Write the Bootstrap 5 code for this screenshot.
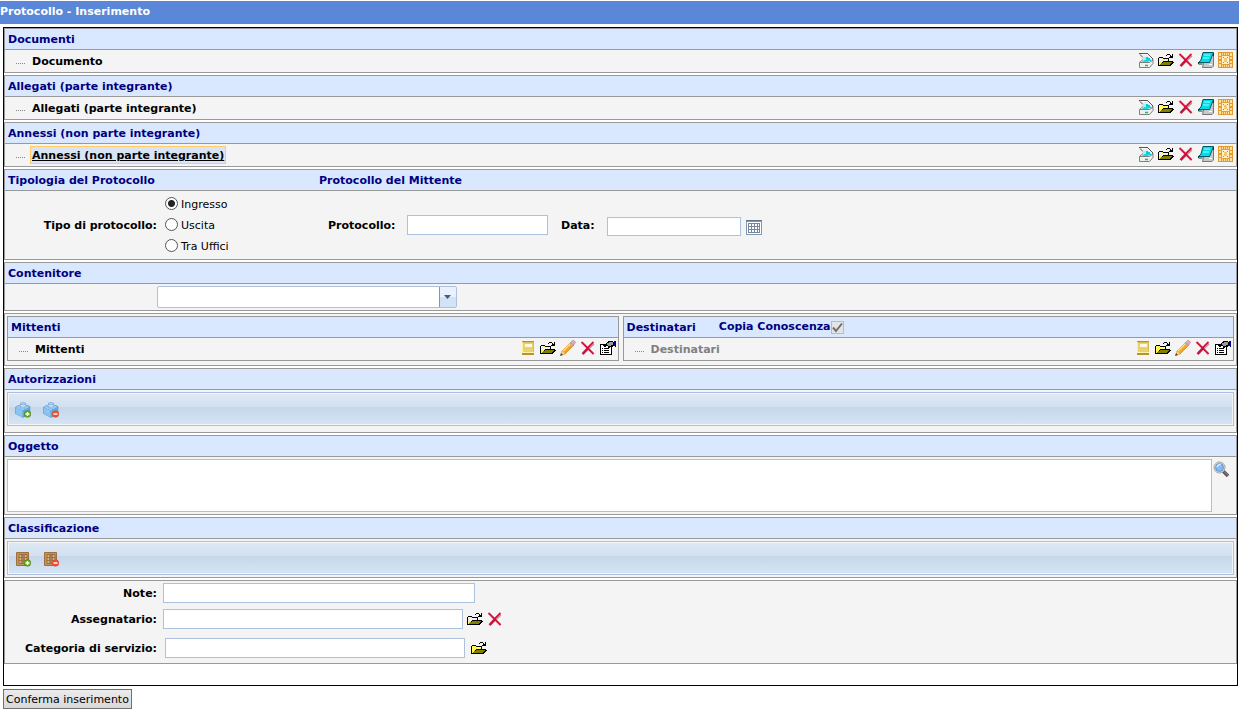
<!DOCTYPE html>
<html lang="it">
<head>
<meta charset="utf-8">
<meta name="viewport" content="width=device-width, initial-scale=1">
<title>Protocollo - Inserimento</title>
<link href="https://cdn.jsdelivr.net/npm/bootstrap@5.3.0/dist/css/bootstrap.min.css" rel="stylesheet">
<style>
  body { font-family: Verdana, "DejaVu Sans", sans-serif; font-size: 11px; line-height: 14px; color: #000; background: #fff; }
  .page-title { margin: 1px 0 3px; height: 23px; line-height: 21px; font-size: 11px; font-weight: 700; color: #fff; background: #5a87d7; }
  .frame { margin: 0 1px 3px 3px; border: 1px solid #000; padding-bottom: 21px; }
  .panels { row-gap: 2px; }
  .panel { border: 1px solid #999; border-radius: 0; background: #f4f4f4; color: #000; }
  .panel > .card-header { height: 21px; padding: 0 3px; line-height: 22px; font-weight: 700; color: #000080; background: #dae8ff; border-bottom: 1px solid #999; border-radius: 0; }
  .panel h2 { font: inherit; margin: 0; }
  .tree-row { height: 22px; padding: 0 2px 0 11px; }
  .tree-icons { align-self: flex-start; padding-top: 2px; gap: 4px; }
  .tree-dots { width: 10px; height: 1px; margin: 5px 4px 0 0; background: repeating-linear-gradient(90deg, #888 0 1px, transparent 1px 2px); }
  .node { font-weight: 700; color: #000; text-decoration: none; border: 1px solid transparent; padding: 2px 1px 0; line-height: 14px; }
  .node.current { background: #d9e4f4; border-color: #ffcc66; text-decoration: underline; }
  .node.off { color: #808080; }
  .icon-btn { border: 0; padding: 0; background: none; width: 16px; height: 16px; display: block; flex: none; }
  .icon-btn svg { display: block; width: 16px; height: 16px; }
  .field { border: 1px solid #abc1de; border-radius: 0; background: #fff; height: 20px; padding: 0 3px; font-size: 11px; min-width: 0; }
  .w-side { width: 152px; }
  .form-cap { font-weight: 700; text-align: right; padding-top: 1px; }
  .head-left { width: 311px; }
  .kind { height: 68px; }
  .kind-left { width: 323px; }
  .radio-line { height: 21px; gap: 3px; }
  .radio-line input { appearance: none; width: 13px; height: 13px; margin: 0 0 1px; border: 1px solid #555; border-radius: 50%; background: #fff; }
  .radio-line input:checked { background: radial-gradient(circle, #222 0 3px, #fff 4px); }
  .radio-line span { padding-top: 1px; }
  .sender-cap { width: 79px; }
  .sender-no { width: 141px; margin-right: 13px; }
  .date-cap { width: 46px; }
  .date-group { padding-top: 3px; gap: 5px; }
  .date-in { width: 134px; height: 19px; }
  .combo { appearance: none; width: 300px; height: 22px; border: 1px solid #abc1de; border-radius: 2px; margin: 2px 0 2px 152px;
    background: url("data:image/svg+xml,%3Csvg xmlns='http://www.w3.org/2000/svg' width='17' height='20'%3E%3Cpath fill='%23e9f1fc' d='M0 0h17v10H0z'/%3E%3Cpath fill='%23d3e3f7' d='M0 10h17v10H0z'/%3E%3Cpath fill='%237b98c4' d='M0 0h1v20H0z'/%3E%3Cpath fill='%23425a8c' d='M5 8h7L8.500 12z'/%3E%3C/svg%3E") right center no-repeat #fff; }
  .parties { padding: 2px 2px 4px; gap: 4px; }
  .copy-check { appearance: none; width: 13px; height: 13px; margin: 0; border: 1px solid #bbb; background: url("data:image/svg+xml,%3Csvg xmlns='http://www.w3.org/2000/svg' viewBox='0 0 11 11'%3E%3Cpath d='M1 5.500l3 3.500L10 1.500' fill='none' stroke='%23707070' stroke-width='2'/%3E%3C/svg%3E") #e4e4e4; }
  .copy-wrap { margin-left: 23px; }
  .tool-strip { margin: 2px; height: 34px; padding: 1px 7px 0; gap: 12px; border: 1px solid #abc1de; box-shadow: inset 0 0 0 1px #f1f6fb; background: linear-gradient(#dfe9f5, #d3e0ef 42%, #c6d7e9 46%, #d5e5f6); }
  .tool-strip.roomy { margin-bottom: 6px; }
  .subject { padding: 2px 7px 2px 2px; gap: 1px; }
  .subject .icon-btn { margin-top: 2px; }
  .area { height: 53px; resize: none; }
  .extra { padding: 2px 0 5px; row-gap: 6px; }
  .extra .field { margin-left: 6px; }
  .extra .after-gap { margin-left: 8px; }
  .wide { width: 312px; }
  .mid { width: 300px; }
  .last-row { padding-top: 3px; }
  .after-field { margin-left: 6px; }
  .confirm { margin-left: 3px; height: 20px; padding: 1px 2px 0; border: 1px solid #707070; background: linear-gradient(#ececec, #d8d8d8); line-height: 16px; color: #000; }
</style>
</head>
<body>
<svg class="d-none" aria-hidden="true">
  <symbol id="i-scan" viewBox="0 0 16 16">
    <path d="M2 1h7l6 5.500V9l-4 1-8-3z" fill="#ececec"/>
    <path d="M1 1.500h9M2 2.500l3 3M9.500 1.500l5.500 5.500-1 2" fill="none" stroke="#555"/>
    <path d="M4 2.500h5l4 4" stroke="#fff" fill="none"/>
    <path d="M5 5h5l4 3-2 2H4z" fill="#a5f2f5"/>
    <path d="M8 5h2v1h2v2h1v1h-3v1H6V8h2z" fill="#00cde0"/>
    <path d="M1.500 10.500L5 7.500M1.500 10.500h10L15 8v3.500L11.500 15.500h-10z" fill="#f0f0f0" stroke="#808080"/>
    <path d="M4 10l2.500-2H12l-2 2z" fill="#20d5e5"/><path d="M7 13.500h3" stroke="#20c040" stroke-width="1.500"/>
  </symbol>
  <symbol id="i-open" viewBox="0 0 16 16" shape-rendering="crispEdges">
    <path d="M0 6h1V5h4v1h6v3h4v1h1v1h-1v1h-1v1h-1v1H0z" fill="#000"/>
    <path d="M1 6h4v1h5v2H5v1H4v1H3v1H2v1H1z" fill="#fff04a"/>
    <path d="M2 6h1v1H2zM1 7h1v1H1zM3 7h1v1H3zM5 7h1v1H5zM7 7h1v1H7zM9 7h1v1H9zM2 8h1v1H2zM4 8h1v1H4zM6 8h1v1H6zM8 8h1v1H8zM1 9h1v1H1zM3 9h1v1H3z" fill="#fff"/>
    <path d="M5 10h9v1h-1v1h-1v1H2v-1h1v-1h2z" fill="#808000"/>
    <path d="M8 3h1v1H8zM9 2h3v1H9zM12 3h1v1h-1zM14 2h1v4h-4V5h1V4h2z" fill="#000"/>
  </symbol>
  <symbol id="i-del" viewBox="0 0 16 16">
    <path d="M3 14.500L14 4M3 3l11 11" stroke="#a59aa0" stroke-width="1.200"/>
    <path d="M1.500 2l12 12M13.500 2L8 7.500" stroke="#dc143c" stroke-width="1.800"/><path d="M8.500 7.500l-6 6.500" stroke="#c81040" stroke-width="2.500"/>
  </symbol>
  <symbol id="i-book" viewBox="0 0 16 16">
    <path d="M9 4l6.500-1v11L14 15.500H4.500L6 9z" fill="#c8c8c8" stroke="#777"/>
    <path d="M5 .5h10.500L11.500 10.500H.5L3 8z" fill="#00dce8" stroke="#005a66"/>
    <path d="M6 3h6M5 6h6" stroke="#9ff"/><path d="M.5 10v2h4M15.500 1v3" fill="none" stroke="#003b44"/>
    <path d="M11 12.500h3" stroke="#fff"/>
  </symbol>
  <symbol id="i-stamp" viewBox="0 0 16 16" shape-rendering="crispEdges">
    <path d="M0 0h15v16H0z" fill="#e09a30"/><path d="M1 1h13v14H1z" fill="#ffe0a0"/>
    <path d="M3 3h9v10H3z" fill="#e3a03a"/><path d="M4 4h7v8H4z" fill="#fff0c8"/>
    <path d="M3 1h1v2H3zM5 1h1v2H5zM7 1h1v2H7zM9 1h1v2H9zM11 1h1v2h-1zM3 13h1v2H3zM5 13h1v2H5zM7 13h1v2H7zM9 13h1v2H9zM11 13h1v2h-1zM1 4h2v1H1zM1 7h2v2H1zM1 11h2v1H1zM12 4h2v1h-2zM12 7h2v2h-2zM12 11h2v1h-2z" fill="#e09a30"/>
    <path d="M5 5h1v1H5zM9 5h1v1H9zM5 10h1v1H5zM9 10h1v1H9z" fill="#c98220"/><path d="M6 6h3v4H6z" fill="#f5c870"/>
  </symbol>
  <symbol id="i-rubrica" viewBox="0 0 16 16" shape-rendering="crispEdges">
    <path d="M2 1h12v14H2z" fill="#d9bd50"/><path d="M3 3h10v9H3z" fill="#e8d270"/>
    <path d="M2 1h12v1H2z" fill="#b4942e"/><path d="M2 12h12v3H2z" fill="#b8952a"/>
    <path d="M5 4h7v3H5z" fill="#fffbe0"/><path d="M2 12h12v1H2z" fill="#fff2b0"/><path d="M2 2h1v10H2z" fill="#fff0a0"/>
  </symbol>
  <symbol id="i-edit" viewBox="0 0 16 16">
    <path d="M1 15l1-4L11 2l3 3-9 9z" fill="#f6a623" stroke="#c77b17" stroke-width=".7"/>
    <path d="M3 11l8-8" stroke="#ffe08a" stroke-width="1.500"/><path d="M10.500 2.500L12.500.5q2-.5 3 2L13.500 5z" fill="#e3aab4" stroke="#a08498" stroke-width=".6"/>
    <path d="M9.500 3.500l3 3 1-1-3-3z" fill="#aab5c8"/><path d="M1 15l1-4 3 3z" fill="#f5d5a5"/><path d="M0 16l1-3 2 2z" fill="#444"/>
  </symbol>
  <symbol id="i-props" viewBox="0 0 16 16" shape-rendering="crispEdges">
    <path d="M0 4h5v1h7v10H0z" fill="#000"/><path d="M1 5h10v9H1z" fill="#fff"/>
    <path d="M2 8h1v1H2zM4 8h5v1H4zM2 10h1v1H2zM4 10h5v1H4zM2 12h1v1H2zM4 12h5v1H4z" fill="#000"/>
    <path d="M4 4h2V3h1V2h1V1h5v1h1v4h-1v1h-3v1H8V6H6v1H4V6H3V5h1z" fill="#000"/>
    <path d="M5 5h2V3h2V2h4v3h-2v1H8v-1H5z" fill="#999"/><path d="M14 1h2v6h-1V6h-1z" fill="#000099"/>
  </symbol>
  <symbol id="i-cal" viewBox="0 0 16 16" shape-rendering="crispEdges">
    <path d="M0 1h16v15H0z" fill="#8296ac"/><path d="M0 1h16v1H0z" fill="#5f7891"/><path d="M1 3h14v12H1z" fill="#fff"/>
    <path d="M2 4h12v10H2z" fill="#75889e"/>
    <path d="M3 5h2v2H3zM6 5h2v2H6zM9 5h2v2H9zM12 5h1v2h-1zM3 8h2v2H3zM6 8h2v2H6zM9 8h2v2H9zM12 8h1v2h-1zM3 11h2v2H3zM6 11h2v2H6zM9 11h2v2H9zM12 11h1v2h-1z" fill="#fff"/>
  </symbol>
  <symbol id="i-brick" viewBox="0 0 16 16">
    <path d="M.5 5L8 2l7 2.500V12l-7 3.500-7.500-4z" fill="#5a9edb" stroke="#5a9bd4" stroke-width=".6"/><path d="M.8 5.500l6.700 3v6.500L1 11.500z" fill="#8cc4f1"/>
    <path d="M8 8.500l6.500-3V11L8 15z" fill="#64aae3"/><path d="M.8 5L8 2.300 14.500 5 7.500 8z" fill="#d3ebfb"/>
    <path d="M5.500 1q2.500-1 5 0v1.500q-2.500 1-5 0zM2 4q2-1 4 0v1q-2 .8-4 0zM5.500 5.500q2-1 4.500 0v1q-2 .8-4.500 0zM10 4q2-1 4 0v1q-2 .8-4 0z" fill="#a6d3f3" stroke="#5a9bd4" stroke-width=".5"/>
  </symbol>
  <symbol id="i-cabinet" viewBox="0 0 16 16">
    <path d="M1.500 1.500h12v13h-12z" fill="#c4935b" stroke="#a06d3c"/><path d="M4 3.500h8v9H4z" fill="#d9b582" stroke="#8d6238" stroke-width=".8"/>
    <path d="M4 6.500h8M4 9.500h8" stroke="#8d6238" stroke-width=".8"/><path d="M6 5h4M6 8h4M6 11h3" stroke="#6b4826"/>
  </symbol>
  <symbol id="i-plus" viewBox="0 0 16 16"><circle cx="12.500" cy="12" r="3.300" fill="#67b315" stroke="#417c0d" stroke-width=".6"/><path d="M10.500 12h4M12.500 10v4" stroke="#fff" stroke-width="1.400"/></symbol>
  <symbol id="i-minus" viewBox="0 0 16 16"><circle cx="12.500" cy="12" r="3.300" fill="#f0502e" stroke="#d9472e" stroke-width=".6"/><path d="M10.500 12h4" stroke="#fff" stroke-width="1.400"/></symbol>
  <symbol id="i-find" viewBox="0 0 16 16">
    <path d="M10 10l5 5" stroke="#555" stroke-width="3.400"/><path d="M11 10.500l4 4" stroke="#999" stroke-width="1"/>
    <circle cx="6.500" cy="6.500" r="5.500" fill="#f3f3ef" stroke="#9a9a94"/><circle cx="6.500" cy="6.500" r="4" fill="#86b9ee" stroke="#5e8ecb"/><path d="M4 6q1-3 4-2.500" fill="none" stroke="#d5eafd" stroke-width="1.500"/>
  </symbol>
</svg>

<h1 class="page-title">Protocollo - Inserimento</h1>
<form>
  <main class="frame">
    <div class="panels d-grid">
      <section class="card panel">
        <div class="card-header"><h2>Documenti</h2></div>
        <div class="tree-row d-flex align-items-center">
          <span class="tree-dots"></span><a class="node me-auto" href="#">Documento</a>
          <div class="tree-icons d-flex">
            <button type="button" class="icon-btn" aria-label="Scansiona"><svg><use href="#i-scan"/></svg></button>
            <button type="button" class="icon-btn" aria-label="Apri"><svg><use href="#i-open"/></svg></button>
            <button type="button" class="icon-btn" aria-label="Elimina"><svg><use href="#i-del"/></svg></button>
            <button type="button" class="icon-btn" aria-label="Visualizza"><svg><use href="#i-book"/></svg></button>
            <button type="button" class="icon-btn" aria-label="Timbro"><svg><use href="#i-stamp"/></svg></button>
          </div>
        </div>
      </section>
      <section class="card panel">
        <div class="card-header"><h2>Allegati (parte integrante)</h2></div>
        <div class="tree-row d-flex align-items-center">
          <span class="tree-dots"></span><a class="node me-auto" href="#">Allegati (parte integrante)</a>
          <div class="tree-icons d-flex">
            <button type="button" class="icon-btn" aria-label="Scansiona"><svg><use href="#i-scan"/></svg></button>
            <button type="button" class="icon-btn" aria-label="Apri"><svg><use href="#i-open"/></svg></button>
            <button type="button" class="icon-btn" aria-label="Elimina"><svg><use href="#i-del"/></svg></button>
            <button type="button" class="icon-btn" aria-label="Visualizza"><svg><use href="#i-book"/></svg></button>
            <button type="button" class="icon-btn" aria-label="Timbro"><svg><use href="#i-stamp"/></svg></button>
          </div>
        </div>
      </section>
      <section class="card panel">
        <div class="card-header"><h2>Annessi (non parte integrante)</h2></div>
        <div class="tree-row d-flex align-items-center">
          <span class="tree-dots"></span><a class="node current me-auto" href="#">Annessi (non parte integrante)</a>
          <div class="tree-icons d-flex">
            <button type="button" class="icon-btn" aria-label="Scansiona"><svg><use href="#i-scan"/></svg></button>
            <button type="button" class="icon-btn" aria-label="Apri"><svg><use href="#i-open"/></svg></button>
            <button type="button" class="icon-btn" aria-label="Elimina"><svg><use href="#i-del"/></svg></button>
            <button type="button" class="icon-btn" aria-label="Visualizza"><svg><use href="#i-book"/></svg></button>
            <button type="button" class="icon-btn" aria-label="Timbro"><svg><use href="#i-stamp"/></svg></button>
          </div>
        </div>
      </section>

      <section class="card panel">
        <div class="card-header d-flex"><h2 class="head-left">Tipologia del Protocollo</h2><h2>Protocollo del Mittente</h2></div>
        <div class="kind d-flex align-items-center">
          <div class="kind-left d-flex align-items-center gap-2" role="radiogroup" aria-labelledby="tipo">
            <span id="tipo" class="w-side form-cap">Tipo di protocollo:</span>
            <div>
              <label class="radio-line d-flex align-items-center"><input type="radio" name="tipo" checked><span>Ingresso</span></label>
              <label class="radio-line d-flex align-items-center"><input type="radio" name="tipo"><span>Uscita</span></label>
              <label class="radio-line d-flex align-items-center"><input type="radio" name="tipo"><span>Tra Uffici</span></label>
            </div>
          </div>
          <label class="form-cap text-start sender-cap" for="prot">Protocollo:</label>
          <input id="prot" class="field sender-no" type="text">
          <label class="form-cap text-start date-cap" for="data">Data:</label>
          <div class="date-group d-flex align-items-center">
            <input id="data" class="field date-in" type="text">
            <button type="button" class="icon-btn" aria-label="Calendario"><svg><use href="#i-cal"/></svg></button>
          </div>
        </div>
      </section>

      <section class="card panel">
        <div class="card-header"><h2><label for="cont">Contenitore</label></h2></div>
        <select id="cont" class="combo d-block"><option></option></select>
      </section>

      <section class="card panel">
        <div class="parties d-flex">
          <div class="card panel flex-fill w-50">
            <div class="card-header"><h2>Mittenti</h2></div>
            <div class="tree-row d-flex align-items-center">
              <span class="tree-dots"></span><a class="node me-auto" href="#">Mittenti</a>
              <div class="tree-icons d-flex">
                <button type="button" class="icon-btn" aria-label="Rubrica"><svg><use href="#i-rubrica"/></svg></button>
                <button type="button" class="icon-btn" aria-label="Apri"><svg><use href="#i-open"/></svg></button>
                <button type="button" class="icon-btn" aria-label="Modifica"><svg><use href="#i-edit"/></svg></button>
                <button type="button" class="icon-btn" aria-label="Elimina"><svg><use href="#i-del"/></svg></button>
                <button type="button" class="icon-btn" aria-label="Proprietà"><svg><use href="#i-props"/></svg></button>
              </div>
            </div>
          </div>
          <div class="card panel flex-fill w-50">
            <div class="card-header d-flex"><h2>Destinatari</h2>
              <label class="copy-wrap d-flex align-items-center">Copia Conoscenza<input class="copy-check" type="checkbox" checked disabled></label></div>
            <div class="tree-row d-flex align-items-center">
              <span class="tree-dots"></span><a class="node off me-auto" href="#">Destinatari</a>
              <div class="tree-icons d-flex">
                <button type="button" class="icon-btn" aria-label="Rubrica"><svg><use href="#i-rubrica"/></svg></button>
                <button type="button" class="icon-btn" aria-label="Apri"><svg><use href="#i-open"/></svg></button>
                <button type="button" class="icon-btn" aria-label="Modifica"><svg><use href="#i-edit"/></svg></button>
                <button type="button" class="icon-btn" aria-label="Elimina"><svg><use href="#i-del"/></svg></button>
                <button type="button" class="icon-btn" aria-label="Proprietà"><svg><use href="#i-props"/></svg></button>
              </div>
            </div>
          </div>
        </div>
      </section>

      <section class="card panel">
        <div class="card-header"><h2>Autorizzazioni</h2></div>
        <div class="tool-strip roomy d-flex align-items-center">
          <button type="button" class="icon-btn" aria-label="Aggiungi autorizzazione"><svg><use href="#i-brick"/><use href="#i-plus"/></svg></button>
          <button type="button" class="icon-btn" aria-label="Rimuovi autorizzazione"><svg><use href="#i-brick"/><use href="#i-minus"/></svg></button>
        </div>
      </section>

      <section class="card panel">
        <div class="card-header"><h2><label for="ogg">Oggetto</label></h2></div>
        <div class="subject d-flex">
          <textarea id="ogg" class="field area flex-fill"></textarea>
          <button type="button" class="icon-btn" aria-label="Cerca"><svg><use href="#i-find"/></svg></button>
        </div>
      </section>

      <section class="card panel">
        <div class="card-header"><h2>Classificazione</h2></div>
        <div class="tool-strip d-flex align-items-center">
          <button type="button" class="icon-btn" aria-label="Aggiungi classificazione"><svg><use href="#i-cabinet"/><use href="#i-plus"/></svg></button>
          <button type="button" class="icon-btn" aria-label="Rimuovi classificazione"><svg><use href="#i-cabinet"/><use href="#i-minus"/></svg></button>
        </div>
      </section>

      <section class="card panel">
        <div class="extra d-grid">
          <div class="d-flex align-items-center"><label class="w-side form-cap" for="note">Note:</label><input id="note" class="field wide" type="text"></div>
          <div class="d-flex align-items-center"><label class="w-side form-cap" for="ass">Assegnatario:</label><input id="ass" class="field mid" type="text">
            <button type="button" class="icon-btn ms-1" aria-label="Apri"><svg><use href="#i-open"/></svg></button>
            <button type="button" class="icon-btn ms-1" aria-label="Elimina"><svg><use href="#i-del"/></svg></button></div>
          <div class="last-row d-flex align-items-center"><label class="w-side form-cap" for="cat">Categoria di servizio:</label><input id="cat" class="field mid after-gap" type="text">
            <button type="button" class="icon-btn after-field" aria-label="Apri"><svg><use href="#i-open"/></svg></button></div>
        </div>
      </section>
    </div>
  </main>
  <button type="submit" class="confirm d-block">Conferma inserimento</button>
</form>
<script src="https://cdn.jsdelivr.net/npm/bootstrap@5.3.0/dist/js/bootstrap.bundle.min.js"></script>
</body>
</html>
